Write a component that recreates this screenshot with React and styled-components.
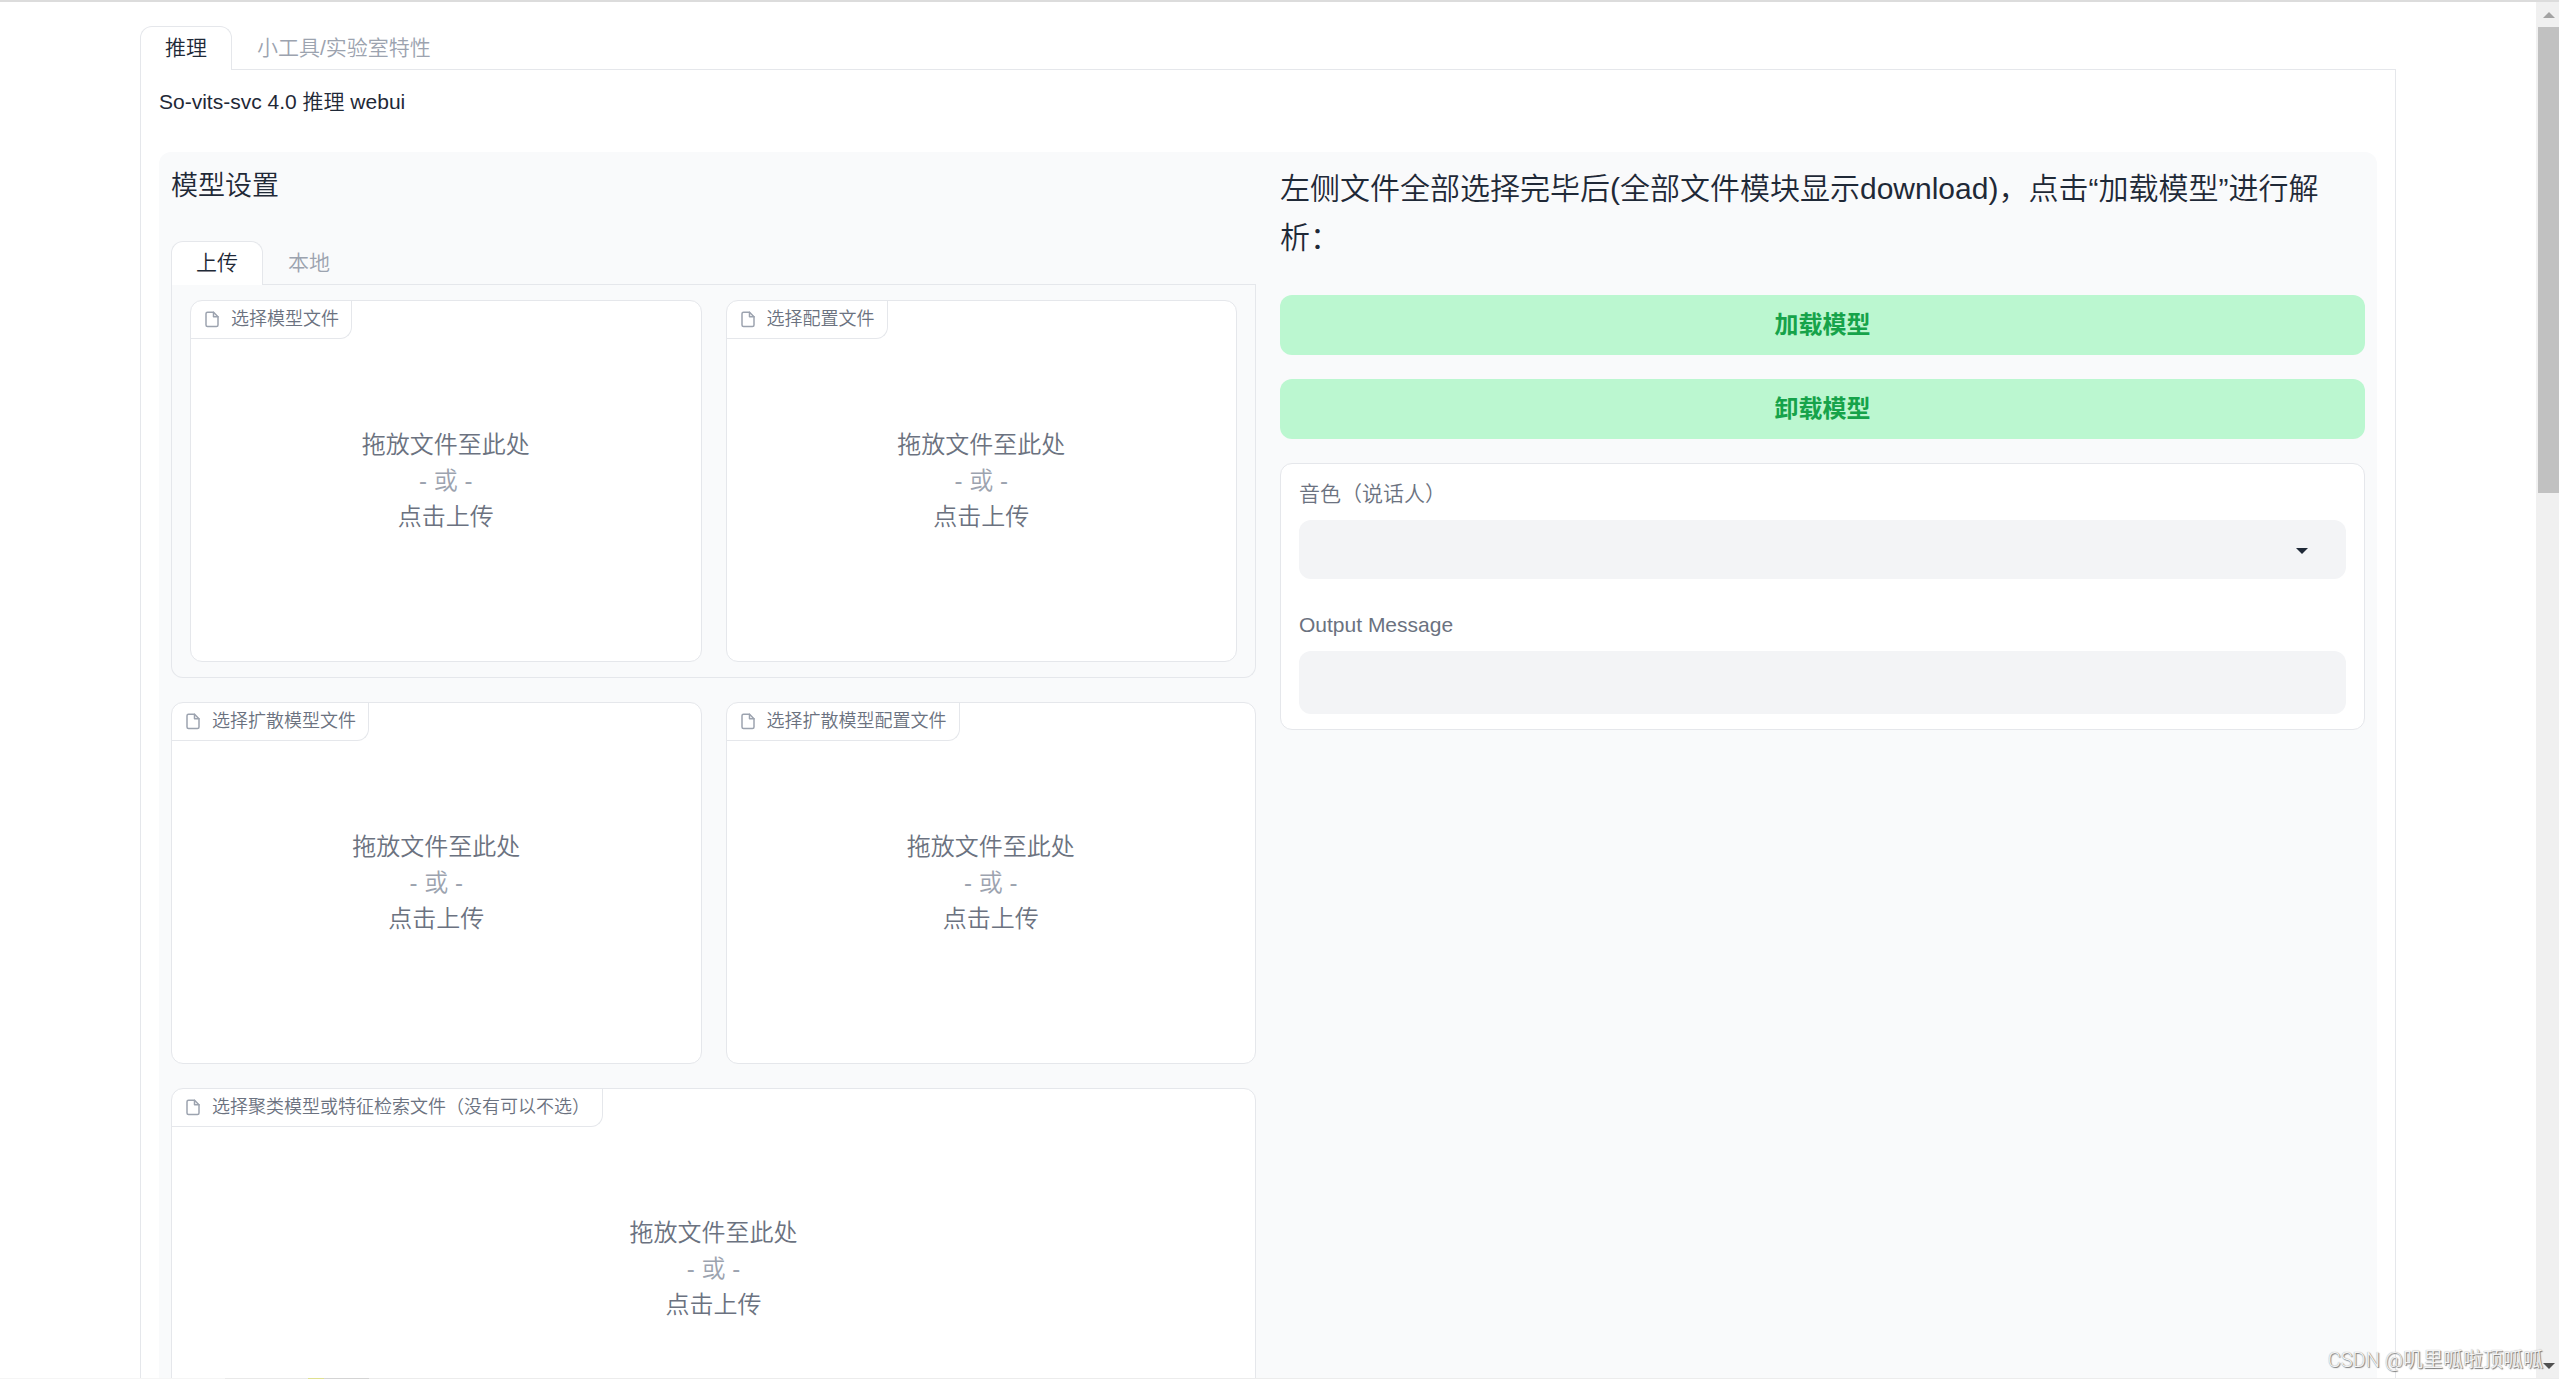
import React from 'react';
import styled, { createGlobalStyle } from 'styled-components';

const GlobalStyle = createGlobalStyle`
    *, *::before, *::after {
        box-sizing: border-box;
    }

    body {
        margin: 0;
        overflow: hidden;
        background: #ffffff;
        color: #1f2937;
        font-family: "Liberation Sans", "Noto Sans CJK SC", sans-serif;
        font-size: 21px;
        font-weight: 350;
        line-height: 32px;
    }

    button, input, select {
        font: inherit;
    }
`

const Window = styled.div`
    position: relative;
    display: flex;
    height: 100vh;
    overflow: hidden;
    border-top: 2px solid #dcdcdc;
`

const BottomEdge = styled.div`
    position: absolute;
    right: 0;
    bottom: 0;
    left: 0;
    height: 1px;
    background: linear-gradient(
        to right,
        #f5f5f5 225px,
        #e9e9e9 225px 308px,
        #dfe090 308px 324px,
        #d4d4d4 324px 369px,
        #ececec 369px
    );
`

const Page = styled.main`
    flex: 1;
    min-width: 0;
    padding: 24px 140px 0;
`

const TabNav = styled.div`
    display: flex;
    border-bottom: 1px solid #e5e7eb;
`

const TabButton = styled.button`
    height: 44px;
    margin-bottom: -1px;
    padding: 0 24px 2px;
    border: 1px solid ${({ $active }) => ($active ? '#e5e7eb' : 'transparent')};
    border-bottom: none;
    border-radius: 12px 12px 0 0;
    background: ${({ $active }) => ($active ? '#ffffff' : 'transparent')};
    color: ${({ $active }) => ($active ? '#1f2937' : '#9ca3af')};
    white-space: nowrap;
`

const TabPanel = styled.div`
    padding: ${({ $inner }) => ($inner ? '15px 18px' : '15px 18px 0')};
    border: 1px solid #e5e7eb;
    border-top: none;
    border-radius: 0 0 12px 12px;
`

const Intro = styled.p`
    margin: 0 0 33px;
    line-height: 34px;
`

const Group = styled.section`
    display: grid;
    grid-template-columns: 1fr 1fr;
    align-items: start;
    gap: 24px;
    padding: 12px;
    border-radius: 12px;
    background: #f9fafb;
`

const Column = styled.div`
    display: flex;
    flex-direction: column;
    gap: 24px;
    min-width: 0;
`

const Title = styled.h3`
    margin: 0 0 9px;
    font-size: 27px;
    font-weight: 350;
    line-height: 44px;
`

const Notice = styled.h2`
    margin: 0 0 9px;
    font-size: 30px;
    font-weight: 350;
    line-height: 49px;
`

const Row = styled.div`
    display: grid;
    grid-template-columns: repeat(${({ $cols }) => $cols}, 1fr);
    gap: 24px;
`

const FileBlock = styled.div`
    position: relative;
    height: 362px;
    overflow: hidden;
    border: 1px solid #e5e7eb;
    border-radius: 12px;
    background: #ffffff;
`

const FileLabel = styled.label`
    position: absolute;
    top: 0;
    left: 0;
    display: flex;
    align-items: center;
    gap: 10px;
    height: 38px;
    padding: 0 12px 2px;
    border-right: 1px solid #e5e7eb;
    border-bottom: 1px solid #e5e7eb;
    border-radius: 0 0 12px 0;
    color: #6b7280;
    font-size: 18px;
    white-space: nowrap;

    svg {
        width: 18px;
        height: 18px;
        color: #9ca3af;
    }
`

const DropButton = styled.button`
    width: 100%;
    height: 100%;
    padding: 0;
    border: none;
    background: transparent;
    color: #6b7280;
    font-size: 24px;
    line-height: 36px;

    span {
        display: block;
    }
`

const Or = styled.span`
    color: #9ca3af;
`

const ActionButton = styled.button`
    height: 60px;
    border: none;
    border-radius: 12px;
    background: #bbf7d0;
    color: #16a34a;
    font-size: 24px;
    font-weight: 700;
`

const Form = styled.div`
    display: flex;
    flex-direction: column;
    gap: 30px;
    padding: 14px 18px 15px;
    border: 1px solid #e5e7eb;
    border-radius: 12px;
    background: #ffffff;
`

const Field = styled.div`
    position: relative;
    display: flex;
    flex-direction: column;
    gap: 10px;
    color: #6b7280;

    svg {
        position: absolute;
        right: 38px;
        bottom: 25px;
        width: 12px;
        height: 6px;
    }
`

const Select = styled.select`
    appearance: none;
    height: 59px;
    border: none;
    border-radius: 12px;
    background: #f3f4f6;
`

const TextInput = styled.input`
    height: 63px;
    border: none;
    border-radius: 12px;
    background: #f3f4f6;
`

const ScrollBar = styled.div`
    display: flex;
    flex-direction: column;
    align-items: center;
    justify-content: space-between;
    width: 23px;
    padding: 10px 0 10px 2px;
    background: #f0f0f0;
`

const Thumb = styled.div`
    width: 100%;
    height: 466px;
    margin: 9px 0 auto;
    background: #c1c1c1;
`

const Watermark = styled.div`
    position: absolute;
    right: 16px;
    bottom: 3px;
    color: #f4f4f4;
    font-family: Roboto, "Noto Sans CJK SC", sans-serif;
    font-size: 20px;
    text-shadow: 1px 1px 1px #777777, 0 0 1px #999999;
`

const FileIcon = () => (
    <svg viewBox="0 0 24 24" fill="none" stroke="currentColor" strokeWidth="2" strokeLinecap="round" strokeLinejoin="round">
        <path d="M14 3H6a2 2 0 0 0-2 2v15a2 2 0 0 0 2 2h12a2 2 0 0 0 2-2V9z" />
        <path d="M14 3v6h6" />
    </svg>
)

const Arrow = ({ up, color }) => (
    <svg width="12" height="6" viewBox="0 0 12 6" fill={color}>
        <path d={up ? 'M0 6h12L6 0z' : 'M0 0h12L6 6z'} />
    </svg>
)

const FileUpload = ({ id, label }) => {
    return (
        <FileBlock>
            <FileLabel htmlFor={id}>
                <FileIcon />
                {label}
            </FileLabel>
            <DropButton id={id} type="button">
                <span>拖放文件至此处</span>
                <Or>- 或 -</Or>
                <span>点击上传</span>
            </DropButton>
        </FileBlock>
    )
}

const App = () => {
    return (
        <>
            <GlobalStyle />
            <Window>
                <Page>
                    <TabNav>
                        <TabButton type="button" $active>推理</TabButton>
                        <TabButton type="button">小工具/实验室特性</TabButton>
                    </TabNav>
                    <TabPanel>
                        <Intro>So-vits-svc 4.0 推理 webui</Intro>
                        <Group>
                            <Column>
                                <Title>模型设置</Title>
                                <div>
                                    <TabNav>
                                        <TabButton type="button" $active>上传</TabButton>
                                        <TabButton type="button">本地</TabButton>
                                    </TabNav>
                                    <TabPanel $inner>
                                        <Row $cols={2}>
                                            <FileUpload id="model" label="选择模型文件" />
                                            <FileUpload id="config" label="选择配置文件" />
                                        </Row>
                                    </TabPanel>
                                </div>
                                <Row $cols={2}>
                                    <FileUpload id="diff-model" label="选择扩散模型文件" />
                                    <FileUpload id="diff-config" label="选择扩散模型配置文件" />
                                </Row>
                                <Row $cols={1}>
                                    <FileUpload id="cluster" label="选择聚类模型或特征检索文件（没有可以不选）" />
                                </Row>
                            </Column>
                            <Column>
                                <Notice>左侧文件全部选择完毕后(全部文件模块显示download)，点击“加载模型”进行解析：</Notice>
                                <ActionButton type="button">加载模型</ActionButton>
                                <ActionButton type="button">卸载模型</ActionButton>
                                <Form>
                                    <Field>
                                        <label htmlFor="speaker">音色（说话人）</label>
                                        <Select id="speaker" />
                                        <Arrow color="#1f2937" />
                                    </Field>
                                    <Field>
                                        <label htmlFor="output">Output Message</label>
                                        <TextInput id="output" type="text" readOnly />
                                    </Field>
                                </Form>
                            </Column>
                        </Group>
                    </TabPanel>
                </Page>
                <ScrollBar>
                    <Arrow up color="#a3a3a3" />
                    <Thumb />
                    <Arrow color="#505050" />
                </ScrollBar>
                <BottomEdge />
                <Watermark>CSDN @叽里呱啦顶呱呱</Watermark>
            </Window>
        </>
    )
}

export default App;
